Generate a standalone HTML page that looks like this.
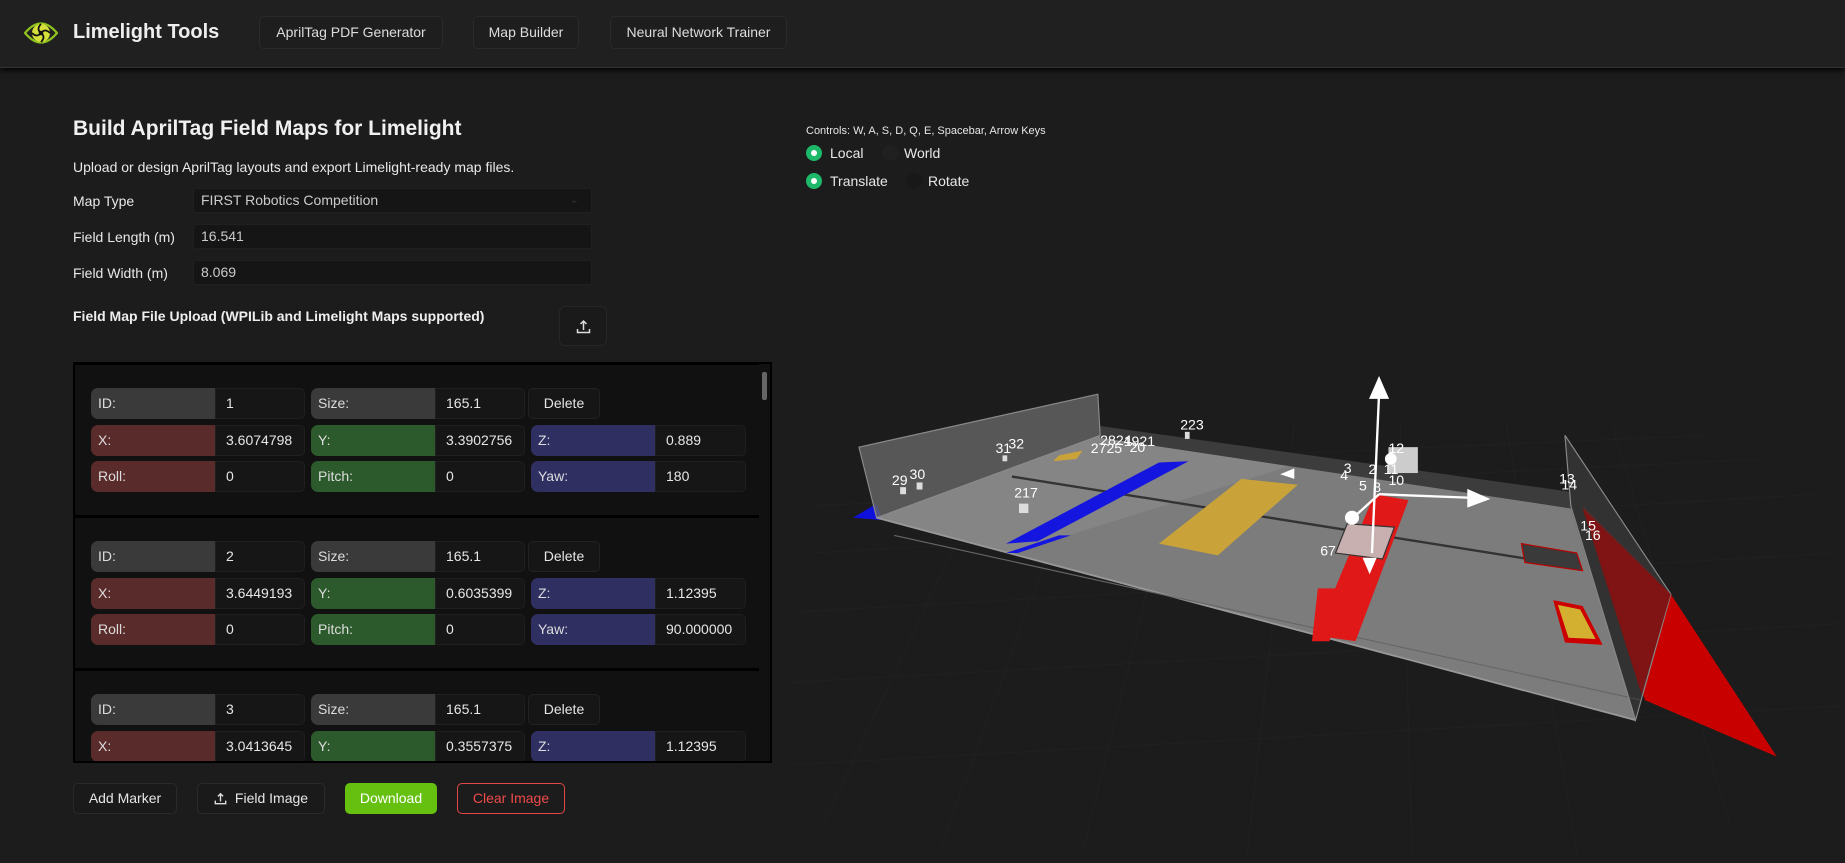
<!DOCTYPE html>
<html><head><meta charset="utf-8"><style>
*{box-sizing:border-box;margin:0;padding:0}
body{width:1845px;height:863px;background:#1c1c1c;font-family:"Liberation Sans",sans-serif;color:#e6e6e6;overflow:hidden;position:relative}
.hdr{position:absolute;left:0;top:0;width:1845px;height:68px;background:#202020;box-shadow:0 2px 6px #000;border-bottom:1px solid #333;z-index:3}
.nav{position:absolute;top:16px;height:33px;border:1px solid #2a2a2a;border-radius:5px;background:#1e1e1e;font-size:14px;color:#ddd;line-height:31px;text-align:center}
.a{position:absolute}
.lbl{font-size:14px;color:#e8e8e8}
.inp{position:absolute;left:193px;width:399px;height:25px;background:#151515;border:1px solid #202020;border-radius:3px;font-size:14px;color:#ccc;padding-left:7px;line-height:23px}
.btn{position:absolute;top:783px;height:31px;border:1px solid #2a2a2a;border-radius:5px;background:#1a1a1a;font-size:14px;line-height:29px;text-align:center;color:#e6e6e6}
.list{position:absolute;left:73px;top:362px;width:699px;height:401px;background:#000;border:2px solid #000;overflow:hidden}
.card{position:absolute;left:0;width:686px;height:150px;background:#111}
.l{position:absolute;height:31px;border-radius:7px 0 0 7px;font-size:14px;line-height:31px;padding-left:7px;color:#ddd}
.v{position:absolute;height:31px;background:#161616;border:1px solid #1f1f1f;border-radius:0 5px 5px 0;font-size:14px;line-height:29px;padding-left:10px;color:#e6e6e6}
.g{background:#3a3a3a}.r{background:#5a2b2b}.gr{background:#2c5a2c}.b{background:#2f2f62}
.del{position:absolute;height:31px;width:72px;background:#161616;border:1px solid #222;border-radius:5px;font-size:14px;line-height:29px;text-align:center;color:#e6e6e6}
</style></head><body>
<svg class="a" style="left:0;top:0;z-index:0" width="1845" height="863" viewBox="0 0 1568 733.4">
<g stroke="#202020" stroke-width="1" fill="none">
<path d="M690 470 L1545 420 M680 520 L1560 470 M672 580 L1565 530 M672 650 L1565 600 M690 430 L1500 390 M760 400 L1450 370"/>
<path d="M700 700 L860 360 M800 720 L930 360 M920 725 L1010 360 M1060 725 L1100 360 M1200 725 L1190 360 M1340 725 L1280 360 M1470 700 L1370 360"/>
</g>
<polygon points="725,440 745,428 750,442" fill="#1010dd"/>
<polygon points="745,440 935,370 1335,432 1390,612" fill="#7c7c7c"/>
<polygon points="745,440 935,370 1100,395 860,470" fill="#858585"/>
<polygon points="935,362 1335,418 1335,432 935,372" fill="#3c3c3c"/>
<polygon points="730,380 933,335 935,370 745,440" fill="#666" fill-opacity="0.8" stroke="#8a8a8a"/>
<line x1="745" y1="440" x2="1390" y2="612" stroke="#999" stroke-width="1.5"/>
<line x1="760" y1="455" x2="1395" y2="595" stroke="#666"/>
<line x1="860" y1="405" x2="1330" y2="480" stroke="#333" stroke-width="2"/>
<polygon points="985,393 1010,392 882,460 855,462" fill="#1515e0"/>
<polygon points="900,455 910,455 865,470 855,470" fill="#1515e0"/>
<polygon points="1055,407 1103,412 1035,472 985,462" fill="#c9a33a"/>
<polygon points="900,387 920,383 915,390 895,392" fill="#c9a33a"/>
<polygon points="1168,420 1197,425 1152,545 1118,540" fill="#e01818"/>
<polygon points="1120,500 1140,500 1130,545 1115,545" fill="#e01818"/>
<polygon points="1145,445 1185,448 1175,475 1135,470" fill="#c8b0b0" stroke="#333"/>
<polygon points="1293,462 1340,470 1345,485 1296,478" fill="#3a3a3a" stroke="#b00"/>
<polygon points="1320,510 1345,515 1362,548 1330,546" fill="#c00"/><polygon points="1324,514 1343,518 1356,543 1333,542" fill="#d4b030"/>
<polygon points="1345,430 1420,505 1510,643 1398,595" fill="#c80000"/>
<polygon points="1330,370 1420,505 1390,612 1335,430" fill="#3a3a3a" fill-opacity="0.75" stroke="#888"/>
<polygon points="1345,432 1420,505 1395,590" fill="#8a0e0e" fill-opacity="0.8"/>
<rect x="1180" y="380" width="25" height="22" fill="#ccc"/>
<g stroke="#fff" stroke-width="2" fill="#fff">
<line x1="1166" y1="470" x2="1172" y2="335"/><polygon points="1172,322 1165,338 1179,338"/>
<line x1="1172" y1="420" x2="1250" y2="423"/><polygon points="1264,424 1248,417 1248,430"/>
<line x1="1172" y1="420" x2="1150" y2="440"/>
</g>
<circle cx="1149" cy="440" r="6" fill="#fff"/><circle cx="1182" cy="390" r="5" fill="#fff"/>
<polygon points="1100,398 1088,403 1100,407" fill="#fff"/><polygon points="1158,474 1170,474 1164,488" fill="#fff"/>
<g fill="#fff" font-family="Liberation Sans" font-size="12">
<text x="758" y="412">29</text><text x="773" y="407">30</text><text x="846" y="385">31</text><text x="857" y="381">32</text>
<text x="862" y="423">217</text><text x="927" y="385">2725</text><text x="935" y="378">2824</text><text x="955" y="379">1921</text><text x="960" y="384">20</text>
<text x="1003" y="365">223</text><text x="1180" y="385">12</text><text x="1142" y="402">3</text><text x="1139" y="408">4</text>
<text x="1155" y="417">5</text><text x="1163" y="403">2</text><text x="1167" y="418">8</text><text x="1176" y="403">11</text><text x="1180" y="412">10</text>
<text x="1122" y="472">67</text><text x="1325" y="411">13</text><text x="1327" y="416">14</text><text x="1343" y="451">15</text><text x="1347" y="459">16</text>
</g>
<g fill="#ddd"><rect x="765" y="414" width="5" height="6"/><rect x="779" y="410" width="5" height="6"/><rect x="852" y="387" width="4" height="5"/><rect x="866" y="428" width="8" height="8"/><rect x="1007" y="367" width="4" height="6"/></g>
</svg>

<div class="hdr">
<svg class="a" style="left:24px;top:16px" width="34" height="34" viewBox="0 0 34 34"><path d="M1 17 Q17 -2 33 17 Q17 36 1 17Z" fill="none" stroke="#8fc21e" stroke-width="2.2"/><circle cx="17" cy="17" r="9" fill="#d6e03a"/><g stroke="#111" stroke-width="1.8" fill="none"><path d="M17 8 Q12 13 17 17"/><path d="M26 17 Q21 12 17 17"/><path d="M17 26 Q22 21 17 17"/><path d="M8 17 Q13 22 17 17"/></g><circle cx="17" cy="17" r="2.3" fill="#111"/></svg>
<div class="a" style="left:73px;top:21px;font-size:20px;font-weight:bold;color:#eee">Limelight Tools</div>
<div class="nav" style="left:259px;width:184px">AprilTag PDF Generator</div>
<div class="nav" style="left:473px;width:106px">Map Builder</div>
<div class="nav" style="left:610px;width:177px">Neural Network Trainer</div>
</div>

<div class="a" style="left:73px;top:117px;font-size:21px;font-weight:bold;color:#f0f0f0">Build AprilTag Field Maps for Limelight</div>
<div class="a lbl" style="left:73px;top:159px">Upload or design AprilTag layouts and export Limelight-ready map files.</div>
<div class="a lbl" style="left:73px;top:193px">Map Type</div>
<div class="inp" style="top:188px">FIRST Robotics Competition<span style="position:absolute;right:12px;color:#333;font-size:11px">⌄</span></div>
<div class="a lbl" style="left:73px;top:229px">Field Length (m)</div>
<div class="inp" style="top:224px">16.541</div>
<div class="a lbl" style="left:73px;top:265px">Field Width (m)</div>
<div class="inp" style="top:260px">8.069</div>
<div class="a" style="left:73px;top:308px;font-size:14px;font-weight:bold;color:#eee">Field Map File Upload (WPILib and Limelight Maps supported)</div>
<div class="a" style="left:559px;top:306px;width:48px;height:40px;border:1px solid #262626;border-radius:6px;background:#1a1a1a"><svg class="a" style="left:16px;top:12px" width="15" height="15" viewBox="0 0 15 15" fill="none" stroke="#ddd" stroke-width="1.5"><path d="M7.5 11V2M4.5 5L7.5 2L10.5 5M1.5 10V13.5H13.5V10"/></svg></div>

<div class="list">
<div class="a" style="right:0;top:0;width:11px;height:401px;background:#111"><div class="a" style="left:3px;top:8px;width:5px;height:28px;background:#666;border-radius:2px"></div></div>
<div class="card" style="top:1px">
<div class="l g" style="left:16px;top:23px;width:124px">ID:</div><div class="v" style="left:140px;top:23px;width:90px">1</div>
<div class="l g" style="left:236px;top:23px;width:124px">Size:</div><div class="v" style="left:360px;top:23px;width:90px">165.1</div>
<div class="del" style="left:453px;top:23px">Delete</div>
<div class="l r" style="left:16px;top:60px;width:124px">X:</div><div class="v" style="left:140px;top:60px;width:90px">3.6074798</div>
<div class="l gr" style="left:236px;top:60px;width:124px">Y:</div><div class="v" style="left:360px;top:60px;width:90px">3.3902756</div>
<div class="l b" style="left:456px;top:60px;width:124px">Z:</div><div class="v" style="left:580px;top:60px;width:91px">0.889</div>
<div class="l r" style="left:16px;top:96px;width:124px">Roll:</div><div class="v" style="left:140px;top:96px;width:90px">0</div>
<div class="l gr" style="left:236px;top:96px;width:124px">Pitch:</div><div class="v" style="left:360px;top:96px;width:90px">0</div>
<div class="l b" style="left:456px;top:96px;width:124px">Yaw:</div><div class="v" style="left:580px;top:96px;width:91px">180</div>
</div>
<div class="card" style="top:154px">
<div class="l g" style="left:16px;top:23px;width:124px">ID:</div><div class="v" style="left:140px;top:23px;width:90px">2</div>
<div class="l g" style="left:236px;top:23px;width:124px">Size:</div><div class="v" style="left:360px;top:23px;width:90px">165.1</div>
<div class="del" style="left:453px;top:23px">Delete</div>
<div class="l r" style="left:16px;top:60px;width:124px">X:</div><div class="v" style="left:140px;top:60px;width:90px">3.6449193</div>
<div class="l gr" style="left:236px;top:60px;width:124px">Y:</div><div class="v" style="left:360px;top:60px;width:90px">0.6035399</div>
<div class="l b" style="left:456px;top:60px;width:124px">Z:</div><div class="v" style="left:580px;top:60px;width:91px">1.12395</div>
<div class="l r" style="left:16px;top:96px;width:124px">Roll:</div><div class="v" style="left:140px;top:96px;width:90px">0</div>
<div class="l gr" style="left:236px;top:96px;width:124px">Pitch:</div><div class="v" style="left:360px;top:96px;width:90px">0</div>
<div class="l b" style="left:456px;top:96px;width:124px">Yaw:</div><div class="v" style="left:580px;top:96px;width:91px">90.000000</div>
</div>
<div class="card" style="top:307px">
<div class="l g" style="left:16px;top:23px;width:124px">ID:</div><div class="v" style="left:140px;top:23px;width:90px">3</div>
<div class="l g" style="left:236px;top:23px;width:124px">Size:</div><div class="v" style="left:360px;top:23px;width:90px">165.1</div>
<div class="del" style="left:453px;top:23px">Delete</div>
<div class="l r" style="left:16px;top:60px;width:124px">X:</div><div class="v" style="left:140px;top:60px;width:90px">3.0413645</div>
<div class="l gr" style="left:236px;top:60px;width:124px">Y:</div><div class="v" style="left:360px;top:60px;width:90px">0.3557375</div>
<div class="l b" style="left:456px;top:60px;width:124px">Z:</div><div class="v" style="left:580px;top:60px;width:91px">1.12395</div>
</div>
</div>

<div class="btn" style="left:73px;width:104px">Add Marker</div>
<div class="btn" style="left:197px;width:128px"><svg style="vertical-align:-2px;margin-right:8px" width="13" height="13" viewBox="0 0 15 15" fill="none" stroke="#ddd" stroke-width="1.6"><path d="M7.5 11V2M4.5 5L7.5 2L10.5 5M1.5 10V13.5H13.5V10"/></svg>Field Image</div>
<div class="btn" style="left:345px;width:92px;background:#66c010;border-color:#66c010;color:#fff">Download</div>
<div class="btn" style="left:457px;width:108px;border-color:#e04848;color:#ef4a4a;background:#1c1c1c">Clear Image</div>

<div class="a" style="left:806px;top:125px;font-size:11px;color:#e6e6e6">Controls: W, A, S, D, Q, E, Spacebar, Arrow Keys</div>
<div class="a" style="left:806px;top:145px;width:16px;height:16px;border-radius:50%;background:#1eb86a"><div class="a" style="left:5px;top:5px;width:6px;height:6px;border-radius:50%;background:#fff"></div></div>
<div class="a lbl" style="left:830px;top:145px">Local</div>
<div class="a" style="left:882px;top:145px;width:16px;height:16px;border-radius:50%;background:#202020"></div>
<div class="a lbl" style="left:904px;top:145px">World</div>
<div class="a" style="left:806px;top:173px;width:16px;height:16px;border-radius:50%;background:#1eb86a"><div class="a" style="left:5px;top:5px;width:6px;height:6px;border-radius:50%;background:#fff"></div></div>
<div class="a lbl" style="left:830px;top:173px">Translate</div>
<div class="a" style="left:906px;top:173px;width:16px;height:16px;border-radius:50%;background:#181818"></div>
<div class="a lbl" style="left:928px;top:173px">Rotate</div>
</body></html>
